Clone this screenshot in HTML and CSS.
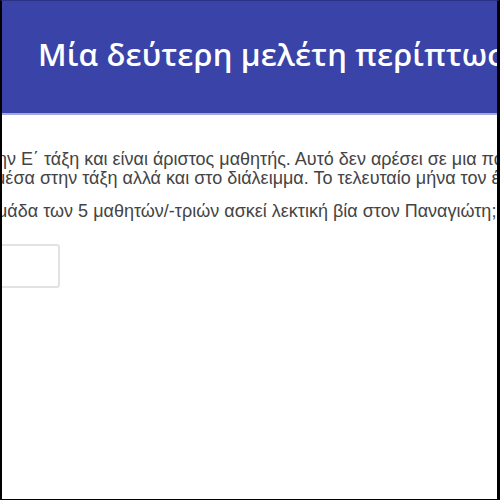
FILE: index.html
```html
<!DOCTYPE html>
<html lang="el">
<head>
<meta charset="utf-8">
<link rel="stylesheet" href="styles.css">
</head>
<body>
<div class="frame">
  <header class="banner">
    <h1 class="title">Μία δεύτερη μελέτη περίπτωσης</h1>
  </header>
  <main class="content">
    <p class="story">
      <span class="line first">ην Ε΄ τάξη και είναι άριστος μαθητής. Αυτό δεν αρέσει σε μια παρέα παιδιών</span>
      <span class="line second">μέσα στην τάξη αλλά και στο διάλειμμα. Το τελευταίο μήνα τον έχουν απομονώσει</span>
    </p>
    <p class="question">μάδα των 5 μαθητών/-τριών ασκεί λεκτική βία στον Παναγιώτη;</p>
    <div class="answer"></div>
  </main>
</div>
</body>
</html>
```

FILE: styles.css
```css
html, body {
  margin: 0;
  padding: 0;
  background: #ffffff;
}

.frame {
  width: 500px;
  height: 500px;
  box-sizing: border-box;
  border-top: 1px solid #2b3285;
  border-left: 2px solid #000000;
  border-right: 3px solid #000000;
  border-bottom: 1px solid #000000;
  overflow: hidden;
  display: flex;
  flex-direction: column;
}

.banner {
  height: 112px;
  flex: none;
  background: #3a43a7;
  border-bottom: 2px solid #a3a8dc;
  display: flex;
  align-items: center;
}

.title {
  margin: 0 0 6px 0;
  padding-left: 36px;
  color: #ffffff;
  font-family: "Open Sans", "Noto Sans", sans-serif;
  font-weight: 600;
  font-size: 31px;
  white-space: nowrap;
  letter-spacing: 0.2px;
}

.content {
  font-family: "Liberation Sans", Arial, sans-serif;
  color: #444444;
  font-size: 18px;
}

.story {
  margin: 35px 0 0 0;
  line-height: 19px;
}

.line {
  display: block;
  white-space: nowrap;
}

.first {
  margin-left: -5px;
}

.second {
  margin-left: -7px;
}

.question {
  margin: 14px 0 0 -5px;
  white-space: nowrap;
  line-height: 19px;
}

.answer {
  margin: 23px 0 0 -30px;
  width: 84px;
  height: 40px;
  border: 2px solid #e2e2e2;
  border-radius: 3px;
  background: #ffffff;
}
```
